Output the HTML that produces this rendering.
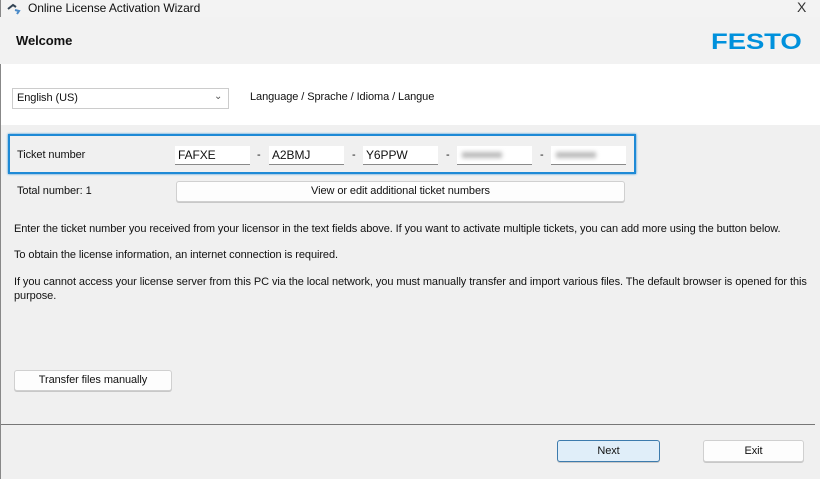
<!DOCTYPE html>
<html><head><style>
*{margin:0;padding:0;box-sizing:border-box}
body{width:820px;height:479px;background:#f0f0f0;font-family:"Liberation Sans",sans-serif;font-size:11px;color:#111;position:relative;overflow:hidden;letter-spacing:-0.08px}
.a{position:absolute;white-space:nowrap}
.btn{position:absolute;background:#fdfdfd;border:1px solid #d0d0d0;border-radius:3px;text-align:center;box-shadow:0 1px 0 #c8c8c8}
.inp{position:absolute;background:#fff;border-bottom:1px solid #8a8a8a;height:19px;padding:2px 3px;font-size:12px}
.blur{position:absolute;height:6px;background:#bbb;filter:blur(2px)}
</style></head><body>
<div class="a" style="left:0;top:0;width:820px;height:17px;background:#f3f3f3"></div>
<div class="a" style="left:0;top:0;width:1px;height:479px;background:#888"></div>
<svg class="a" style="left:7px;top:3px" width="14" height="12" viewBox="0 0 14 12"><path d="M1 6 L6 2 L9 4" stroke="#345" stroke-width="2" fill="none"/><path d="M8 7 L12 8 L10 11" stroke="#4a8ac8" stroke-width="2" fill="none"/></svg>
<div class="a" style="left:28px;top:1px;font-size:12px">Online License Activation Wizard</div>
<div class="a" style="left:797px;top:-1px;font-size:14px;color:#333">X</div>
<div class="a" style="left:0;top:17px;width:820px;height:47px;background:#f2f2f2"></div>
<div class="a" style="left:16px;top:33px;font-size:13px;font-weight:bold">Welcome</div>
<div class="a" style="left:711px;top:29px;font-size:22px;font-weight:bold;color:#0091dc;transform:scaleX(1.25);transform-origin:left">FESTO</div>
<div class="a" style="left:1px;top:64px;width:819px;height:61px;background:#fff"></div>
<div class="a" style="left:12px;top:88px;width:217px;height:21px;border:1px solid #ccc;background:#fff;padding:3px 4px">English (US)</div>
<div class="a" style="left:214px;top:91px;font-size:10px;color:#555">&#8964;</div>
<div class="a" style="left:250px;top:91px">Language / Sprache / Idioma / Langue</div>
<div class="a" style="left:8px;top:134px;width:628px;height:40px;border:2px solid #1e8ad6;box-shadow:0 0 2px #1e8ad6"></div>
<div class="a" style="left:17px;top:149px">Ticket number</div>
<div class="inp" style="left:175px;top:146px;width:75px">FAFXE</div>
<div class="a" style="left:257px;top:149px">-</div>
<div class="inp" style="left:269px;top:146px;width:75px">A2BMJ</div>
<div class="a" style="left:352px;top:149px">-</div>
<div class="inp" style="left:363px;top:146px;width:75px">Y6PPW</div>
<div class="a" style="left:446px;top:149px">-</div>
<div class="inp" style="left:457px;top:146px;width:75px"></div><div class="blur" style="left:462px;top:152px;width:40px"></div>
<div class="a" style="left:540px;top:149px">-</div>
<div class="inp" style="left:551px;top:146px;width:75px"></div><div class="blur" style="left:556px;top:152px;width:40px"></div>
<div class="a" style="left:17px;top:185px">Total number: 1</div>
<div class="btn" style="left:176px;top:181px;width:449px;height:21px;line-height:19px">View or edit additional ticket numbers</div>
<div class="a" style="left:14px;top:223px">Enter the ticket number you received from your licensor in the text fields above. If you want to activate multiple tickets, you can add more using the button below.</div>
<div class="a" style="left:14px;top:249px">To obtain the license information, an internet connection is required.</div>
<div class="a" style="left:14px;top:275px;white-space:normal;width:800px;line-height:14px">If you cannot access your license server from this PC via the local network, you must manually transfer and import various files. The default browser is opened for this purpose.</div>
<div class="btn" style="left:14px;top:370px;width:158px;height:21px;line-height:19px">Transfer files manually</div>
<div class="a" style="left:1px;top:424px;width:814px;height:1px;background:#777"></div>
<div class="btn" style="left:557px;top:440px;width:103px;height:22px;line-height:20px;background:#e0eef9;border-color:#3d7bad">Next</div>
<div class="btn" style="left:703px;top:440px;width:101px;height:22px;line-height:20px">Exit</div>
</body></html>
